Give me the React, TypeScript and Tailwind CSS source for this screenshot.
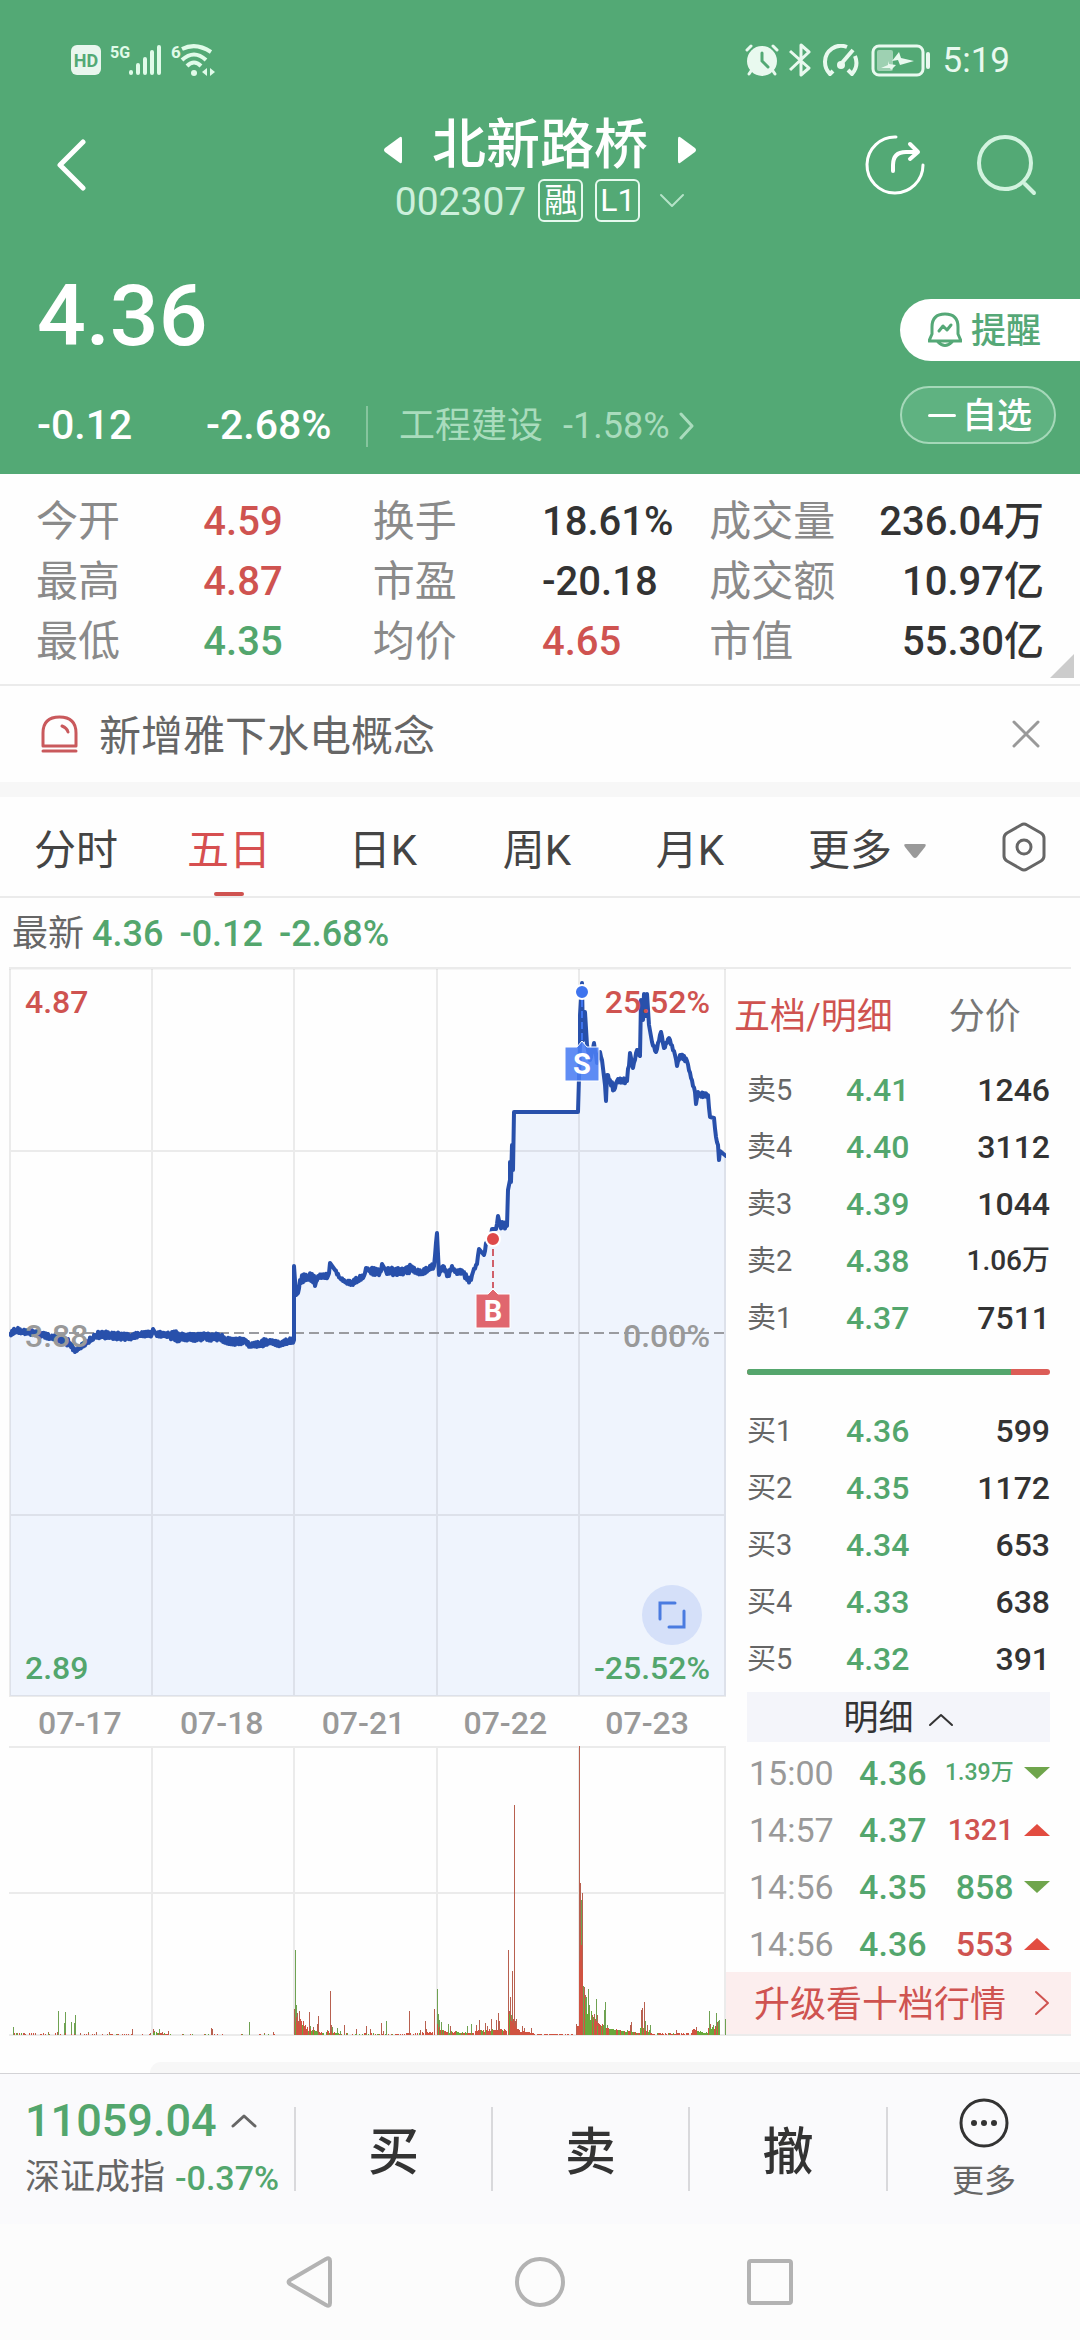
import React from "react";

const RED = "text-[#cf5350]";
const GREEN = "text-[#53a66d]";

/* ---------- chart data ---------- */

function makeRandom(seed: number) {
  let s = seed;
  return () => {
    s = (s * 1103515245 + 12345) % 2147483648;
    return s / 2147483648;
  };
}

// x, y, jitter of the minute line around the key point
const PRICE_KEYS: [number, number, number][] = [
  [10, 1334, 2], [16, 1330, 2], [22, 1331, 2], [40, 1334, 2], [50, 1337, 2], [60, 1339, 3], [70, 1343, 2],
  [75, 1352, 1], [80, 1347, 2], [88, 1341, 2], [92, 1338, 2], [96, 1335, 3], [110, 1335, 3], [130, 1337, 2],
  [140, 1334, 2], [152, 1334, 1], [153, 1329, 0], [156, 1334, 2], [170, 1335, 4], [180, 1337, 3], [205, 1337, 3],
  [220, 1337, 3], [226, 1341, 3], [245, 1341, 2], [250, 1345, 2], [260, 1344, 3], [268, 1341, 2], [280, 1344, 2],
  [288, 1341, 2], [294, 1340, 0], [294, 1266, 0], [296, 1295, 0], [298, 1293, 2], [300, 1280, 3], [308, 1276, 4],
  [316, 1282, 2], [318, 1276, 2], [328, 1276, 3], [330, 1263, 0], [335, 1270, 1], [340, 1278, 1], [346, 1282, 2],
  [352, 1283, 2], [358, 1279, 2], [364, 1276, 1], [366, 1268, 1], [370, 1271, 3], [380, 1272, 3], [382, 1264, 0],
  [386, 1271, 3], [405, 1272, 3], [411, 1268, 2], [416, 1271, 2], [422, 1273, 2], [428, 1269, 2], [434, 1266, 1],
  [437, 1233, 0], [439, 1275, 1], [443, 1266, 2], [448, 1276, 2], [452, 1266, 1], [455, 1272, 2], [464, 1272, 3],
  [467, 1280, 2], [471, 1280, 1], [473, 1272, 1], [477, 1264, 1], [479, 1249, 0], [484, 1255, 2], [486, 1243, 1],
  [490, 1240, 1], [492, 1229, 0], [496, 1229, 1], [498, 1216, 0], [500, 1225, 3], [507, 1226, 0], [508, 1190, 0],
  [510, 1180, 0], [510, 1162, 0], [511, 1182, 0], [512, 1145, 0], [513, 1170, 0], [514, 1112, 0], [578, 1112, 0],
  [580, 1043, 0], [580, 1015, 0], [582, 983, 0], [583, 1040, 0], [585, 1012, 0], [587, 1045, 0], [590, 1060, 2],
  [594, 1043, 1], [597, 1063, 1], [600, 1052, 1], [602, 1060, 0], [605, 1085, 0], [606, 1101, 0], [607, 1075, 2],
  [610, 1080, 4], [614, 1090, 1], [617, 1081, 2], [627, 1081, 3], [630, 1053, 0], [633, 1068, 1], [637, 1050, 1],
  [640, 1056, 0], [641, 1000, 0], [643, 1020, 1], [644, 994, 0], [646, 1016, 0], [647, 994, 0], [649, 1025, 0],
  [652, 1042, 1], [656, 1052, 1], [661, 1032, 1], [664, 1048, 1], [669, 1038, 1], [675, 1055, 1], [677, 1066, 1],
  [680, 1055, 2], [687, 1061, 1], [691, 1078, 1], [695, 1092, 1], [696, 1104, 0], [698, 1092, 1], [700, 1095, 2],
  [708, 1095, 2], [710, 1117, 0], [714, 1118, 1], [716, 1137, 1], [718, 1145, 1], [719, 1160, 0], [720, 1151, 0],
  [726, 1156, 0],
];

function buildPricePath() {
  const rnd = makeRandom(7);
  const pts: string[] = [];
  for (let i = 0; i < PRICE_KEYS.length - 1; i++) {
    const [x0, y0, j0] = PRICE_KEYS[i];
    const [x1, y1] = PRICE_KEYS[i + 1];
    pts.push(`${x0},${y0}`);
    if (j0 === 0) continue;
    for (let x = x0 + 1; x < x1; x++) {
      const t = (x - x0) / (x1 - x0);
      const sign = x % 2 ? 1 : -1;
      const y = y0 + (y1 - y0) * t + sign * j0 * (0.7 + rnd() * 0.6);
      pts.push(`${x},${y.toFixed(1)}`);
    }
  }
  const last = PRICE_KEYS[PRICE_KEYS.length - 1];
  pts.push(`${last[0]},${last[1]}`);
  return "M" + pts.join("L");
}
const PRICE_PATH = buildPricePath();

type Bar = [number, number, "r" | "g"];
const SPIKES: Bar[] = [
  [13, 8, "g"], [17, 2, "r"], [24, 2, "r"], [35, 2, "r"], [48, 3, "r"], [57, 3, "r"], [58, 24, "g"], [64, 12, "g"],
  [65, 23, "g"], [71, 13, "g"], [74, 12, "g"], [75, 20, "g"], [80, 2, "r"], [88, 3, "g"], [96, 3, "r"], [109, 3, "r"],
  [132, 6, "r"], [150, 2, "r"], [153, 6, "r"], [154, 4, "r"], [159, 6, "g"], [162, 3, "r"], [168, 4, "r"], [211, 7, "r"],
  [212, 6, "r"], [249, 13, "g"], [264, 2, "r"], [273, 3, "r"], [294, 26, "r"], [295, 85, "g"], [296, 30, "g"],
  [297, 22, "r"], [299, 24, "r"], [300, 16, "r"], [301, 12, "r"], [303, 14, "r"], [309, 23, "r"], [310, 9, "g"],
  [313, 8, "r"], [317, 11, "r"], [318, 19, "r"], [327, 5, "g"], [330, 44, "r"], [331, 10, "r"], [332, 8, "g"],
  [337, 7, "g"], [340, 4, "g"], [344, 10, "r"], [356, 6, "r"], [366, 9, "r"], [370, 6, "r"], [381, 12, "r"],
  [383, 4, "r"], [386, 14, "g"], [409, 24, "r"], [420, 5, "r"], [425, 14, "r"], [426, 6, "r"], [434, 26, "r"],
  [437, 46, "g"], [438, 21, "g"], [439, 15, "g"], [441, 13, "g"], [448, 11, "g"], [450, 9, "r"], [467, 9, "g"],
  [471, 11, "g"], [476, 10, "r"], [479, 15, "r"], [485, 12, "r"], [487, 9, "r"], [491, 16, "r"], [496, 15, "r"],
  [498, 22, "r"], [499, 14, "r"], [508, 85, "r"], [509, 24, "r"], [510, 38, "r"], [511, 20, "g"], [512, 64, "r"],
  [513, 16, "r"], [514, 230, "r"], [515, 14, "r"], [516, 16, "r"], [518, 6, "r"], [522, 9, "r"], [524, 7, "r"],
  [531, 7, "r"], [576, 11, "r"], [579, 289, "r"], [580, 152, "r"], [581, 135, "g"], [582, 142, "r"], [583, 49, "g"],
  [584, 48, "r"], [585, 40, "r"], [586, 38, "g"], [588, 46, "g"], [589, 30, "g"], [591, 24, "g"], [592, 20, "r"],
  [594, 21, "r"], [596, 36, "g"], [597, 20, "r"], [604, 25, "g"], [605, 33, "g"], [607, 10, "g"], [630, 10, "r"],
  [631, 13, "r"], [641, 25, "r"], [642, 27, "r"], [644, 33, "r"], [645, 14, "g"], [647, 10, "r"], [650, 10, "g"],
  [676, 5, "r"], [696, 8, "r"], [709, 24, "g"], [710, 11, "r"], [713, 10, "g"], [716, 22, "g"], [717, 13, "r"],
  [718, 14, "g"], [719, 15, "g"], [725, 16, "g"],
];
// from, to, height at start, height at end, density, share of falling minutes
const VOLUME_FILL: [number, number, number, number, number, number][] = [
  [12, 150, 2, 1, 0.3, 0.1], [152, 172, 3, 1, 0.7, 0.4], [172, 292, 1, 1, 0.15, 0.3], [295, 308, 20, 8, 1, 0.15],
  [308, 325, 6, 2, 0.8, 0.6], [326, 345, 4, 1, 0.8, 0.5], [345, 405, 2, 1, 0.4, 0.3], [405, 436, 2, 3, 0.7, 0.1],
  [437, 448, 10, 4, 1, 0.4], [448, 474, 4, 2, 0.9, 0.4], [475, 507, 5, 6, 1, 0.2], [508, 518, 22, 8, 1, 0.2],
  [518, 535, 5, 2, 1, 0], [535, 575, 1, 1, 0.5, 0], [577, 583, 110, 105, 1, 0], [584, 592, 42, 20, 1, 0.8],
  [592, 606, 18, 7, 1, 0.4], [606, 640, 7, 3, 1, 0.4], [640, 650, 9, 4, 1, 0.4], [650, 692, 2, 2, 0.8, 0.3],
  [692, 708, 6, 2, 1, 0.5], [708, 720, 7, 10, 1, 0.6],
];
function buildVolume(): Bar[] {
  const rnd = makeRandom(31);
  const out: Bar[] = [];
  for (const [a, b, h0, h1, density, fall] of VOLUME_FILL) {
    for (let x = a; x < b; x++) {
      const keep = rnd() < density;
      const h = (h0 + ((h1 - h0) * (x - a)) / (b - a)) * (0.6 + rnd() * 0.5);
      const down = rnd() < fall;
      if (keep && !(x === 577 || x === 578)) out.push([x, Math.max(1, Math.round(h)), down ? "g" : "r"]);
      else if (keep) out.push([x, 9, "r"]);
    }
  }
  return out;
}
const FILL = buildVolume();
const barsPath = (bars: Bar[], c: "r" | "g") =>
  bars.filter((b) => b[2] === c).map(([x, h]) => `M${x},2035h1v${-h}h-1z`).join("");

/* ---------- icons ---------- */

function StatusLeft() {
  return (
    <div className="flex items-center">
      <span className="flex h-[30px] w-[30px] items-center justify-center rounded-md bg-[#e9f6ee] text-[18px] font-bold text-[#53a975]">HD</span>
      <span className="mb-3.5 ml-[9px] w-[19px] text-[16px] leading-4 font-bold text-[#e0fbe9]">5G</span>
      <svg width="33" height="32" viewBox="0 0 33 32" stroke="#e0fbe9" strokeWidth="4" strokeLinecap="round" aria-hidden="true">
        <path d="M2 28v1M9 21v8M16 15v14M23 8v21M30 3v26" />
      </svg>
      <span className="mb-4 ml-[9px] w-[9px] text-[17px] leading-4 font-bold text-[#e0fbe9]">6</span>
      <svg width="36" height="34" viewBox="0 0 36 34" fill="none" stroke="#e0fbe9" strokeWidth="4" aria-hidden="true">
        <path d="M2 6Q16-1 31 9" />
        <path d="M2 17Q14 6 26 17" />
        <path d="M7 23Q14 16 21 23" />
        <circle cx="14" cy="30" r="3" fill="#e0fbe9" stroke="none" />
        <path d="M27 25v8l-5-4zM30 25v8l5-4z" fill="#e0fbe9" stroke="none" />
      </svg>
    </div>
  );
}

function StatusRight() {
  return (
    <div className="flex items-center text-[#e9f9ef]">
      <svg width="34" height="32" viewBox="0 0 34 32" fill="none" stroke="currentColor" strokeLinecap="round" aria-hidden="true">
        <circle cx="17" cy="17" r="15" fill="currentColor" stroke="none" />
        <path d="M2 6l4-4M32 6l-4-4M6 27l-2 3M28 27l2 3" strokeWidth="3" />
        <path d="M17 9v8l6 6" stroke="#53a975" strokeWidth="3" />
      </svg>
      <svg className="ml-[10px]" width="22" height="34" viewBox="0 0 22 34" fill="none" stroke="currentColor" strokeWidth="3" strokeLinejoin="round" aria-hidden="true">
        <path d="M1 8l19 17-8 7V2l8 7L1 27" />
      </svg>
      <svg className="ml-[12px]" width="36" height="32" viewBox="0 0 36 32" fill="none" stroke="currentColor" strokeWidth="4" aria-hidden="true">
        <path d="M10 27l-3 3Q2 25 2 18A16 16 0 0 1 24 3M32 12q4 10-3 18l-4-4" />
        <circle cx="18" cy="21" r="4" fill="currentColor" stroke="none" />
        <path d="M18 20L30 6" strokeWidth="4" />
      </svg>
      <svg className="ml-[12px]" width="61" height="33" viewBox="0 0 61 33" fill="none" aria-hidden="true">
        <rect x="2" y="2" width="50" height="29" rx="6" stroke="currentColor" strokeWidth="3" />
        <rect x="6" y="6" width="16" height="21" rx="2" fill="currentColor" opacity=".5" />
        <path d="M28 8l2 6 13 3-14 4-2-5-6 1zM17 17l1 3 7 1-5 5-1-2-9 0 7-3z" fill="currentColor" />
        <rect x="55" y="8" width="4" height="17" rx="2" fill="currentColor" />
      </svg>
      <span className="ml-[11px] pt-0.5 text-[35px] leading-10">5:19</span>
    </div>
  );
}

function Chevron({ d, w, h, className }: { d: string; w: number; h: number; className?: string }) {
  return (
    <svg className={className} width={w} height={h} viewBox={`0 0 ${w} ${h}`} fill="none" stroke="currentColor" strokeLinecap="round" strokeLinejoin="round" aria-hidden="true">
      <path d={d} />
    </svg>
  );
}

/* ---------- sections ---------- */

function Header() {
  return (
    <header className="bg-[#53a975] text-white">
      <div className="flex h-28 items-center justify-between pt-2 pr-[70px] pl-[71px]">
        <StatusLeft />
        <StatusRight />
      </div>

      <div className="grid h-28 grid-cols-[1fr_auto_1fr] items-center">
        <button aria-label="返回" className="ml-[56px] justify-self-start pb-1.5">
          <Chevron d="M27 3L4 26L27 49" w={31} h={52} className="stroke-[5]" />
        </button>
        <div className="flex flex-col items-center">
          <div className="flex h-16 items-center gap-[29px] pt-1">
            <button aria-label="上一只">
              <svg width="19" height="28" viewBox="0 0 19 28" fill="currentColor" className="mt-2" aria-hidden="true">
                <path d="M16 1q2-1 2 2v22q0 3-2 2L1 16q-2-2 0-4z" />
              </svg>
            </button>
            <h1 className="text-[54px] leading-[60px] font-medium">北新路桥</h1>
            <button aria-label="下一只">
              <svg width="19" height="28" viewBox="0 0 19 28" fill="currentColor" className="mt-2" aria-hidden="true">
                <path d="M3 1Q1 0 1 3v22q0 3 2 2l15-11q2-2 0-4z" />
              </svg>
            </button>
          </div>
          <div className="flex h-12 items-center">
            <span className="pt-1 text-[39px] leading-11 text-[#cdf0dc]">002307</span>
            <span className="ml-3 flex h-[43px] w-[45px] items-center justify-center rounded-md border-2 border-[#e6f9ee] pt-0.5 text-[33px] leading-8">融</span>
            <span className="ml-3 flex h-[43px] w-[45px] items-center justify-center rounded-md border-2 border-[#e6f9ee] text-[32px] leading-8">L1</span>
            <button aria-label="展开" className="ml-[19px] text-[#b5e3c8]">
              <Chevron d="M2 2L13 13L24 2" w={26} h={15} className="stroke-2" />
            </button>
          </div>
        </div>
        <div className="mr-[43px] flex items-center gap-[49px] justify-self-end pb-1.5">
          <button aria-label="分享">
            <svg width="62" height="62" viewBox="0 0 62 62" fill="none" stroke="currentColor" strokeWidth="3" strokeLinecap="round" strokeLinejoin="round" aria-hidden="true">
              <path d="M32 3A28 28 0 1 0 59 31" />
              <path d="M29 37v-6Q29 18 42 18H53M46 10l8 8-8 7" strokeWidth="4" />
            </svg>
          </button>
          <button aria-label="搜索" className="text-[#d2f3df]">
            <svg width="62" height="62" viewBox="0 0 62 62" fill="none" stroke="currentColor" strokeWidth="4" strokeLinecap="round" aria-hidden="true">
              <circle cx="30" cy="29" r="26" />
              <path d="M50 50l9 9" />
            </svg>
          </button>
        </div>
      </div>

      <div className="flex justify-between">
        <div className="pt-[44px] pb-[24px] pl-[37px]">
          <div className="text-[86px] leading-[96px] font-medium">4.36</div>
          <div className="mt-[38px] flex h-12 items-center text-[41px] font-medium">
            <span className="w-[169px]">-0.12</span>
            <span className="w-[160px]">-2.68%</span>
            <a href="#sector" className="flex items-center border-l-2 border-[#86c59e] pl-[31px] text-[36px] leading-[41px] font-normal text-[#a9dcbd]">
              工程建设
              <span className="ml-5">-1.58%</span>
              <Chevron d="M2 2L13 14L2 26" w={15} h={28} className="ml-[9px] stroke-[3]" />
            </a>
          </div>
        </div>
        <div className="flex w-[180px] shrink-0 flex-col items-start gap-[25px] pt-[75px]">
          <button className="flex h-[62px] w-full items-center rounded-l-full bg-white pl-[28px] text-[35px] leading-[46px] font-medium text-[#55a877]">
            <svg className="mr-[9px]" width="34" height="36" viewBox="0 0 34 36" fill="none" stroke="currentColor" strokeWidth="3" strokeLinejoin="round" strokeLinecap="round" aria-hidden="true">
              <path d="M4 22V15Q4 2 17 2t13 13v7l3 7H1zM10 30q7 7 14 0" />
              <path d="M11 19l4-5 4 4 4-5" />
            </svg>
            <span className="pt-1">提醒</span>
          </button>
          <button className="flex h-[58px] w-[156px] items-center rounded-full border-2 border-[#a5d8b9] bg-[#5fb281] pl-[26px] text-[35px] leading-[46px] font-medium">
            <span className="mr-1.5 h-[3px] w-[28px] rounded-full bg-white" />
            <span className="pt-1">自选</span>
          </button>
        </div>
      </div>
    </header>
  );
}

const STATS: [string, string, string][] = [
  ["今开", "4.59", RED], ["换手", "18.61%", "text-[#333]"], ["成交量", "236.04万", "text-[#333]"],
  ["最高", "4.87", RED], ["市盈", "-20.18", "text-[#333]"], ["成交额", "10.97亿", "text-[#333]"],
  ["最低", "4.35", GREEN], ["均价", "4.65", RED], ["市值", "55.30亿", "text-[#333]"],
];

function Stats() {
  return (
    <section className="relative border-b-2 border-[#ebebeb] pt-[18px] pb-[12px]">
      <dl className="grid grid-cols-[167fr_169fr_169fr_167fr_134fr_200fr] px-[36px] leading-[60px]">
        {STATS.map(([label, value, color], i) => (
          <React.Fragment key={label}>
            <dt className="text-[42px] whitespace-nowrap text-[#8a8a8a]">{label}</dt>
            <dd className={`text-[40px] font-medium whitespace-nowrap ${color} ${i % 3 === 2 ? "text-right" : ""}`}>{value}</dd>
          </React.Fragment>
        ))}
      </dl>
      <svg className="absolute right-1.5 bottom-1.5" width="24" height="24" viewBox="0 0 24 24" aria-hidden="true">
        <path d="M24 0V24H0z" fill="#cccccc" />
      </svg>
    </section>
  );
}

function Notice() {
  return (
    <section className="flex h-24 items-center pr-[40px] pl-[41px] text-[42px] text-[#666]">
      <svg width="37" height="38" viewBox="0 0 37 38" fill="none" stroke="#c9595c" strokeWidth="3" strokeLinecap="round" strokeLinejoin="round" aria-hidden="true">
        <path d="M2 31V18Q2 2 18.500 2T35 18V31z" />
        <path d="M2 36H35M21 11q5 2 6 6" />
      </svg>
      <a href="#notice" className="ml-[21px] pt-1.5 leading-[60px]">新增雅下水电概念</a>
      <button aria-label="关闭" className="ml-auto">
        <svg width="28" height="28" viewBox="0 0 28 28" stroke="#999" strokeWidth="3" strokeLinecap="round" aria-hidden="true">
          <path d="M2 2L26 26M26 2L2 26" />
        </svg>
      </button>
    </section>
  );
}

function Tabs() {
  return (
    <nav className="grid h-[101px] grid-cols-[152fr_154fr_154fr_154fr_152fr_202fr_112fr] border-b-2 border-[#ebebeb] pt-2 text-[42px] text-[#444]">
      {["分时", "五日", "日K", "周K", "月K"].map((t) => (
        <button key={t} className={t === "五日" ? "relative text-[#d64f50]" : ""}>
          {t}
          {t === "五日" && <span className="absolute bottom-0 left-1/2 h-1 w-[30px] -translate-x-1/2 rounded-full bg-[#cf5350]" />}
        </button>
      ))}
      <button className="flex items-center justify-center gap-3">
        更多
        <svg width="22" height="14" viewBox="0 0 22 14" fill="#999" aria-hidden="true">
          <path d="M2 0H20q3 0 1 3l-8 10q-2 2-4 0L1 3Q-1 0 2 0z" />
        </svg>
      </button>
      <button aria-label="设置" className="flex items-center justify-center pb-2">
        <svg width="44" height="50" viewBox="0 0 44 50" fill="none" stroke="#666" strokeWidth="3" strokeLinejoin="round" aria-hidden="true">
          <path d="M19 3q3-2 6 0l14 8q3 2 3 5v18q0 3-3 5l-14 8q-3 2-6 0L5 39q-3-2-3-5V16q0-3 3-5z" />
          <circle cx="22" cy="25" r="7" />
        </svg>
      </button>
    </nav>
  );
}

function PriceChart() {
  return (
    <div className="relative text-[32px] leading-9">
      <svg className="block h-auto w-full" viewBox="9 967 717 730" aria-label="五日走势">
        <path d={`${PRICE_PATH}V1696H10Z`} fill="#eff4fd" />
        <g fill="none" stroke="#000" strokeOpacity=".075" strokeWidth="2">
          <path d="M9 968H726" strokeWidth="3" />
          <path d="M9 1151H726M9 1515H726M9 1696H726M10 969V1696M152 969V1696M294 969V1696M437 969V1696M579 969V1696M725 969V1696" />
        </g>
        <path d="M9 1333H726" stroke="#9a9ba0" strokeWidth="2" strokeDasharray="10 5" />
        <path d={PRICE_PATH} fill="none" stroke="#2850ab" strokeWidth="4" strokeLinejoin="round" strokeLinecap="round" />
        <path d="M493 1249V1288" stroke="#d0606a" strokeWidth="2" strokeDasharray="7 4" />
        <circle cx="493" cy="1239" r="7" fill="#de4a4a" stroke="#fff" strokeWidth="2" />
        <path d="M476 1294H488L493 1289L498 1294H510V1328H476z" fill="#e0666e" stroke="#fff" strokeWidth="1" />
        <path d="M582 1000V1040" stroke="#3f74ee" strokeWidth="2" strokeDasharray="7 4" />
        <circle cx="582" cy="992" r="7" fill="#3f74ee" stroke="#fff" strokeWidth="2" />
        <path d="M565 1047H577L582 1041L587 1047H599V1081H565z" fill="#4a7df2" fillOpacity=".88" stroke="#fff" strokeWidth="1" />
        <g fill="#fff" fontSize="29" fontWeight="700" textAnchor="middle">
          <text x="493" y="1321">B</text>
          <text x="582" y="1074">S</text>
        </g>
      </svg>
      <span className={`absolute top-[17px] left-4 font-medium ${RED}`}>4.87</span>
      <span className={`absolute top-[17px] right-4 font-medium ${RED}`}>25.52%</span>
      <span className="absolute top-1/2 left-4 -mt-3.5 font-medium text-[#999]">3.88</span>
      <span className="absolute top-1/2 right-4 -mt-3.5 font-medium text-[#999]">0.00%</span>
      <span className={`absolute bottom-[11px] left-4 font-medium ${GREEN}`}>2.89</span>
      <span className={`absolute right-4 bottom-[11px] font-medium ${GREEN}`}>-25.52%</span>
      <button aria-label="全屏" className="absolute right-6 bottom-[52px] flex h-[60px] w-[60px] items-center justify-center rounded-full bg-[#d5e0f9]">
        <svg width="30" height="30" viewBox="0 0 30 30" fill="none" stroke="#4a7be0" strokeWidth="3" strokeLinecap="round" aria-hidden="true">
          <path d="M3 19V3H18M27 11V27H12" />
        </svg>
      </button>
    </div>
  );
}

function VolumeChart() {
  return (
    <svg className="block h-auto w-full" viewBox="9 1746 717 290" aria-label="成交量">
      <path d="M9 1747H726M9 1893H726M9 2035H726M152 1747V2035M294 1747V2035M437 1747V2035M579 1747V2035M725 1747V2035" fill="none" stroke="#ebebeb" strokeWidth="2" />
      <g shapeRendering="crispEdges">
        <path d={barsPath(SPIKES, "g")} fill="#6fa252" />
        <path d={barsPath(SPIKES, "r")} fill="#b8604f" />
        <path d={barsPath(FILL, "r")} fill="#d05341" />
        <path d={barsPath(FILL, "g")} fill="#69a83c" />
      </g>
    </svg>
  );
}

const SELL: [string, string, string][] = [
  ["卖5", "4.41", "1246"], ["卖4", "4.40", "3112"], ["卖3", "4.39", "1044"], ["卖2", "4.38", "1.06万"], ["卖1", "4.37", "7511"],
];
const BUY: [string, string, string][] = [
  ["买1", "4.36", "599"], ["买2", "4.35", "1172"], ["买3", "4.34", "653"], ["买4", "4.33", "638"], ["买5", "4.32", "391"],
];

function Levels({ rows }: { rows: [string, string, string][] }) {
  return (
    <table className="w-full table-fixed">
      <tbody>
        {rows.map(([label, price, qty]) => (
          <tr key={label} className="h-[57px] leading-[40px]">
            <th scope="row" className="w-[32%] p-0 text-left text-[29px] font-normal text-[#666]">{label}</th>
            <td className={`p-0 pl-0.5 text-[32px] font-medium ${GREEN}`}>{price}</td>
            <td className={`p-0 text-right font-medium whitespace-nowrap text-[#333] ${qty.endsWith("万") ? "text-[28px]" : "text-[32px]"}`}>{qty}</td>
          </tr>
        ))}
      </tbody>
    </table>
  );
}

const TICKS: [string, string, string, boolean, string][] = [
  ["15:00", "4.36", "1.39万", false, "text-[23px]"],
  ["14:57", "4.37", "1321", true, "text-[29px]"],
  ["14:56", "4.35", "858", false, "text-[34px]"],
  ["14:56", "4.36", "553", true, "text-[34px]"],
];

function OrderBook() {
  return (
    <aside className="flex flex-col border-y-2 border-[#ebebeb]">
      <div className="flex h-[92px] items-center pt-1 pl-2 text-[36px]">
        <button className={RED}>五档/明细</button>
        <button className="ml-[56px] text-[#777]">分价</button>
      </div>
      <div className="px-[21px]">
        <Levels rows={SELL} />
        <div className="mt-[23px] mb-[27px] flex h-1.5 overflow-hidden rounded-full bg-[#dc5d57]">
          <div className="w-[87%] bg-[#55a66d]" />
        </div>
        <Levels rows={BUY} />
        <button className="mt-[5px] mb-0.5 flex h-[50px] w-full items-center justify-center gap-3.5 bg-[#f4f5fa] pt-1 text-[35px] text-[#333]">
          明细
          <Chevron d="M2 13L13 3L24 13" w={26} h={15} className="stroke-[2]" />
        </button>
        <table className="w-full table-fixed">
          <tbody>
            {TICKS.map(([time, price, qty, up, size], i) => (
              <tr key={i} className="h-[57px] leading-[40px]">
                <td className="w-[37%] p-0 pl-0.5 text-[34px] text-[#999]">{time}</td>
                <td className={`w-[23%] p-0 text-[34px] font-medium ${GREEN}`}>{price}</td>
                <td className={`p-0 text-right font-medium whitespace-nowrap ${size} ${up ? RED : GREEN}`}>{qty}</td>
                <td className="w-[12%] p-0">
                  <svg className="ml-auto" width="26" height="12" viewBox="0 0 26 12" aria-label={up ? "涨" : "跌"}>
                    <path d={up ? "M0 12L13 0L26 12z" : "M0 0H26L13 12z"} fill={up ? "#e24c40" : "#6fa54c"} />
                  </svg>
                </td>
              </tr>
            ))}
          </tbody>
        </table>
      </div>
      <a href="#upgrade" className="flex h-[62px] items-center justify-between bg-[#fceeee] pr-[21px] pl-[28px] text-[36px] text-[#cf5350]">
        <span className="pt-1">升级看十档行情</span>
        <Chevron d="M2 2L14 13L2 24" w={16} h={26} className="stroke-[2]" />
      </a>
    </aside>
  );
}

function Footer() {
  return (
    <footer className="grid h-[151px] grid-cols-[294fr_197fr_197fr_198fr_194fr] items-center border-t border-[#d3d3d6] bg-[#fafafc]">
      <button className="pl-[25px] text-left whitespace-nowrap">
        <div className={`flex h-14 items-center text-[45px] font-medium ${GREEN}`}>
          11059.04
          <Chevron d="M2 13L13 3L24 13" w={26} h={16} className="ml-3.5 stroke-[3] text-[#666]" />
        </div>
        <div className="flex h-14 items-center pt-0.5 text-[35px] text-[#666]">
          深证成指
          <span className={`ml-2.5 text-[34px] font-medium ${GREEN}`}>-0.37%</span>
        </div>
      </button>
      {["买", "卖", "撤"].map((t) => (
        <button key={t} className="flex h-[84px] items-center justify-center border-l-2 border-[#d9d9dc] pt-2 text-[51px] font-medium text-[#333]">{t}</button>
      ))}
      <div className="flex h-[84px] items-center justify-center border-l-2 border-[#d9d9dc] pt-1">
        <button className="flex flex-col items-center gap-2 text-[32px] leading-[48px] text-[#666]">
          <svg width="52" height="52" viewBox="0 0 52 52" fill="none" aria-hidden="true">
            <circle cx="26" cy="26" r="23" stroke="#333" strokeWidth="3" />
            <g fill="#333">
              <circle cx="16" cy="26" r="3" />
              <circle cx="26" cy="26" r="3" />
              <circle cx="36" cy="26" r="3" />
            </g>
          </svg>
          更多
        </button>
      </div>
    </footer>
  );
}

function SystemNav() {
  return (
    <nav className="flex h-[116px] items-center justify-center gap-[178px] bg-[#fcfcfc]">
      <button aria-label="系统返回">
        <svg width="52" height="54" viewBox="0 0 52 54" fill="none" stroke="#b3b3b3" strokeWidth="4" strokeLinejoin="round" aria-hidden="true">
          <path d="M42 4Q46 2 46 6V48q0 4-4 2L6 29q-3-2 0-4z" />
        </svg>
      </button>
      <button aria-label="主屏幕">
        <svg width="52" height="54" viewBox="0 0 52 54" fill="none" stroke="#b3b3b3" strokeWidth="4" aria-hidden="true">
          <circle cx="26" cy="27" r="23" />
        </svg>
      </button>
      <button aria-label="最近任务">
        <svg width="52" height="54" viewBox="0 0 52 54" fill="none" stroke="#b3b3b3" strokeWidth="4" aria-hidden="true">
          <rect x="5" y="6" width="42" height="42" rx="2" />
        </svg>
      </button>
    </nav>
  );
}

export default function App() {
  return (
    <div className="bg-[#fefefe] font-['Roboto','Noto_Sans_CJK_SC',sans-serif]">
      <Header />
      <Stats />
      <Notice />
      <div className="h-[15px] bg-[#f7f7f7]" />
      <Tabs />
      <div className={`flex h-[69px] items-center pt-0.5 pl-3 text-[36px] font-medium ${GREEN}`}>
        <span className="font-normal text-[#666]">最新</span>
        <span className="ml-2">4.36</span>
        <span className="ml-4">-0.12</span>
        <span className="ml-4">-2.68%</span>
      </div>
      <main className="grid grid-cols-[717fr_345fr] px-[9px]">
        <div>
          <PriceChart />
          <div className="grid h-[49px] grid-cols-5 items-center pt-0.5 pr-2 text-center text-[32px] font-medium text-[#999]">
            {["07-17", "07-18", "07-21", "07-22", "07-23"].map((d) => (
              <span key={d}>{d}</span>
            ))}
          </div>
          <VolumeChart />
        </div>
        <OrderBook />
      </main>
      <div className="mt-[26px] ml-[150px] h-[11px] rounded-tl-xl bg-[#f7f7f7]" />
      <Footer />
      <SystemNav />
    </div>
  );
}
